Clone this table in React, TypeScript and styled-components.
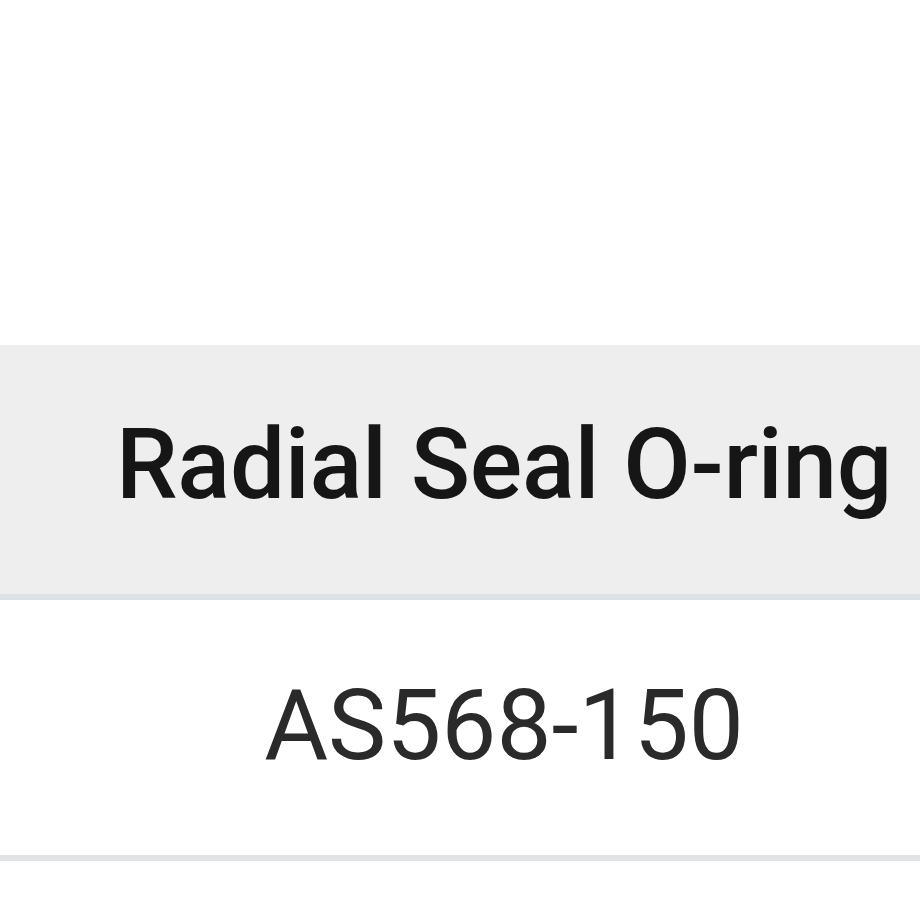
import React from "react";
import styled, { createGlobalStyle } from "styled-components";

const GlobalStyle = createGlobalStyle`
  html, body {
    margin: 0;
    padding: 0;
    background: #ffffff;
    overflow: hidden;
  }
  body {
    font-family: Roboto, "Liberation Sans", Arial, sans-serif;
  }
`;

const Page = styled.div`
  width: 920px;
  height: 920px;
  overflow: hidden;
  padding-top: 345px;
  box-sizing: border-box;
`;

const Table = styled.table`
  width: 1008px;
  border-collapse: collapse;
  table-layout: fixed;
`;

const HeadCell = styled.th`
  height: 239px;
  padding: 0 0 10px 0;
  background: #eeeeee;
  border-bottom: 6px solid #dee2e6;
  color: #161616;
  font-size: 98px;
  font-weight: 500;
  text-align: center;
  vertical-align: middle;
  white-space: nowrap;
  letter-spacing: -0.3px;
`;

const BodyCell = styled.td`
  height: 251px;
  padding: 0 0 4px 0;
  background: #ffffff;
  border-bottom: 6px solid #e2e3e5;
  color: #2a2a2a;
  font-size: 98px;
  font-weight: 400;
  text-align: center;
  vertical-align: middle;
  white-space: nowrap;
`;

export default function App() {
  return (
    <>
      <GlobalStyle />
      <Page>
        <Table>
          <thead>
            <tr>
              <HeadCell>Radial Seal O-ring</HeadCell>
            </tr>
          </thead>
          <tbody>
            <tr>
              <BodyCell>AS568-150</BodyCell>
            </tr>
          </tbody>
        </Table>
      </Page>
    </>
  );
}
